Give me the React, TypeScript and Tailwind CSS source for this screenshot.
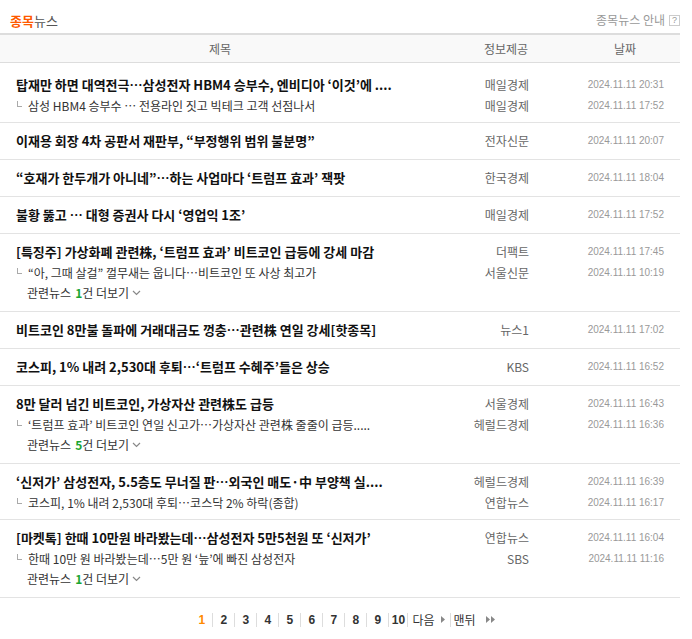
import React from 'react'

type NewsLine = { title: string; source: string; time: string }
type NewsItem = { main: NewsLine; sub?: NewsLine; more?: number }

const items: NewsItem[] = [
  {
    main: { title: '탑재만 하면 대역전극…삼성전자 HBM4 승부수, 엔비디아 ‘이것’에 ....', source: '매일경제', time: '2024.11.11 20:31' },
    sub: { title: '삼성 HBM4 승부수 … 전용라인 짓고 빅테크 고객 선점나서', source: '매일경제', time: '2024.11.11 17:52' },
  },
  { main: { title: '이재용 회장 4차 공판서 재판부, “부정행위 범위 불분명”', source: '전자신문', time: '2024.11.11 20:07' } },
  { main: { title: '“호재가 한두개가 아니네”…하는 사업마다 ‘트럼프 효과’ 잭팟', source: '한국경제', time: '2024.11.11 18:04' } },
  { main: { title: '불황 뚫고 … 대형 증권사 다시 ‘영업익 1조’', source: '매일경제', time: '2024.11.11 17:52' } },
  {
    main: { title: '[특징주] 가상화폐 관련株, ‘트럼프 효과’ 비트코인 급등에 강세 마감', source: '더팩트', time: '2024.11.11 17:45' },
    sub: { title: '“아, 그때 살걸” 껄무새는 웁니다…비트코인 또 사상 최고가', source: '서울신문', time: '2024.11.11 10:19' },
    more: 1,
  },
  { main: { title: '비트코인 8만불 돌파에 거래대금도 껑충…관련株 연일 강세[핫종목]', source: '뉴스1', time: '2024.11.11 17:02' } },
  { main: { title: '코스피, 1% 내려 2,530대 후퇴…‘트럼프 수혜주’들은 상승', source: 'KBS', time: '2024.11.11 16:52' } },
  {
    main: { title: '8만 달러 넘긴 비트코인, 가상자산 관련株도 급등', source: '서울경제', time: '2024.11.11 16:43' },
    sub: { title: '‘트럼프 효과’ 비트코인 연일 신고가…가상자산 관련株 줄줄이 급등.....', source: '헤럴드경제', time: '2024.11.11 16:36' },
    more: 5,
  },
  {
    main: { title: '‘신저가’ 삼성전자, 5.5층도 무너질 판…외국인 매도·中 부양책 실....', source: '헤럴드경제', time: '2024.11.11 16:39' },
    sub: { title: '코스피, 1% 내려 2,530대 후퇴…코스닥 2% 하락(종합)', source: '연합뉴스', time: '2024.11.11 16:17' },
  },
  {
    main: { title: '[마켓톡] 한때 10만원 바라봤는데…삼성전자 5만5천원 또 ‘신저가’', source: '연합뉴스', time: '2024.11.11 16:04' },
    sub: { title: '한때 10만 원 바라봤는데…5만 원 ‘늪’에 빠진 삼성전자', source: 'SBS', time: '2024.11.11 11:16' },
    more: 1,
  },
]

const cols = 'grid grid-cols-[440px_132px_108px]'

function Meta({ line }: { line: NewsLine }) {
  return (
    <>
      <div className="pr-[43px] text-right text-[12px] text-[#666]">{line.source}</div>
      <div className="pr-[16px] text-right font-['Liberation_Sans',sans-serif] text-[10px] text-[#999]">{line.time}</div>
    </>
  )
}

function Row({ item, first }: { item: NewsItem; first: boolean }) {
  return (
    <div className={`border-b border-[#e3e3e3] pb-[7px] ${first ? 'pt-[11px]' : 'pt-[7px]'}`}>
      <div className={`${cols} h-[22px] items-center leading-[22px]`}>
        <div className="overflow-hidden whitespace-nowrap pl-[16px] text-[13px] font-bold text-[#111]">{item.main.title}</div>
        <Meta line={item.main} />
      </div>
      {item.sub ? (
        <div className={`${cols} h-[19px] items-center leading-[19px]`}>
          <div className="flex items-center overflow-hidden whitespace-nowrap pl-[17px] text-[12px] text-[#333]">
            <span className="mr-[6px] mt-[-4px] h-[6px] w-[5px] shrink-0 border-b border-l border-[#aaa]" />
            <span>{item.sub.title}</span>
          </div>
          <Meta line={item.sub} />
        </div>
      ) : null}
      {item.more ? (
        <div className="flex h-[22px] items-center pl-[27px] text-[12px] leading-[22px] text-[#333]">
          <span>관련뉴스 </span>
          <span className="ml-[4px] font-bold text-[#1aa531]">{item.more}</span>
          <span>건 더보기</span>
          <svg width="9" height="6" viewBox="0 0 9 6" className="ml-[3px]">
            <polyline points="1,1 4.5,4.5 8,1" fill="none" stroke="#888" strokeWidth="1.2" />
          </svg>
        </div>
      ) : null}
    </div>
  )
}

function Arrow() {
  return (
    <svg width="4" height="7" viewBox="0 0 4 7">
      <polygon points="0,0 4,3.5 0,7" fill="#888" />
    </svg>
  )
}

export default function App() {
  const pages = [1, 2, 3, 4, 5, 6, 7, 8, 9, 10]
  return (
    <div className="w-[692px] bg-white font-['Noto_Sans_CJK_KR',sans-serif] text-[#333]">
      <div className="w-[680px]">
        <div className="flex h-[33px] items-center justify-between pl-[10px] pt-[7px]">
          <div className="text-[13px] leading-none">
            <span className="font-bold text-[#ff5a00]">종목</span>
            <span className="text-[#555]">뉴스</span>
          </div>
          <div className="flex items-center text-[12px] leading-none text-[#999]">
            <span>종목뉴스 안내</span>
            <span className="ml-[4px] flex h-[11px] w-[11px] items-center justify-center border border-[#ccc] font-['Liberation_Sans',sans-serif] text-[9px] text-[#999]">?</span>
          </div>
        </div>

        <div className={`${cols} h-[30px] items-center border-b border-t-2 border-[#dddddd] bg-[#f9f9f9] text-[12px] text-[#666]`}>
          <div className="text-center">제목</div>
          <div className="text-center">정보제공</div>
          <div className="pr-[2px] text-center">날짜</div>
        </div>

        {items.map((item, i) => (
          <Row key={i} item={item} first={i === 0} />
        ))}

        <div className="flex h-[43px] items-center justify-center pl-[6px] text-[12px]">
          {pages.map((p, i) => (
            <React.Fragment key={p}>
              {i > 0 ? <span className="h-[14px] w-px bg-[#ddd]" /> : null}
              <span
                className={`text-center font-['Liberation_Sans',sans-serif] font-bold ${p === 10 ? 'w-[18px]' : 'w-[21px]'} ${p === 1 ? 'text-[#ff8a00]' : 'text-[#333]'}`}
              >
                {p}
              </span>
            </React.Fragment>
          ))}
          <span className="h-[14px] w-px bg-[#ddd]" />
          <span className="ml-[4px] text-[#333]">다음</span>
          <span className="ml-[6px] mr-[5px]"><Arrow /></span>
          <span className="h-[14px] w-px bg-[#ddd]" />
          <span className="ml-[3px] text-[#333]">맨뒤</span>
          <span className="ml-[10px] flex gap-[1px]"><Arrow /><Arrow /></span>
        </div>
      </div>
    </div>
  )
}
